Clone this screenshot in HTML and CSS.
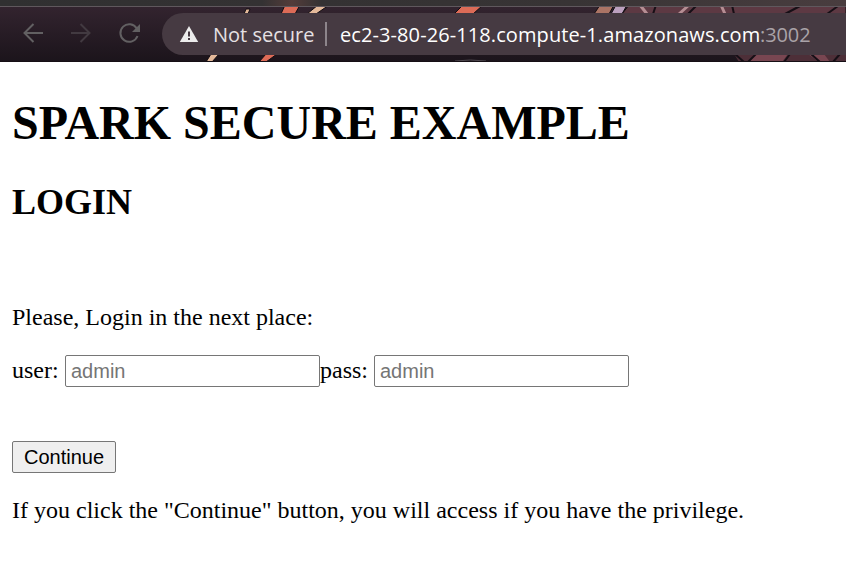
FILE: index.html
```html
<!DOCTYPE html>
<html lang="en">
<head>
<meta charset="utf-8">
<title>Spark Secure Example</title>
<link rel="stylesheet" href="styles.css">
</head>
<body>
<header class="toolbar">
  <svg class="art" width="846" height="62" viewBox="0 0 846 62" aria-hidden="true">
    <defs>
      <linearGradient id="bar" x1="0" y1="0" x2="0" y2="1"><stop offset="0" stop-color="#33242f"/><stop offset="1" stop-color="#1b141b"/></linearGradient>
      <linearGradient id="tab" x1="0" y1="0" x2="1" y2="0"><stop offset="0" stop-color="#303031"/><stop offset=".31" stop-color="#343233"/><stop offset=".345" stop-color="#533c3a"/><stop offset=".38" stop-color="#343233"/><stop offset=".68" stop-color="#383435"/><stop offset="1" stop-color="#493d3f"/></linearGradient>
    </defs>
    <path fill="url(#bar)" d="M0 6h846v56H0z"/>
    <g stroke="#100c12" stroke-width="1">
      <path fill="#dc6b57" d="M285 5h15l-5 9h-14zM259 62l7-8h11l-11 8zM463 5h20l-10 9h-19z"/>
      <path fill="#e4b99a" d="M318 5h11l-13 9h-9zM206 62l5-8h8l-7 8zM244 14l2-5h4l-2 5z"/>
      <path fill="#ab7465" d="M600 5h14l-5 9h-15z"/>
      <path fill="#bca0bf" d="M616 5h11l-5 9h-11z"/>
      <path fill="#5d3943" d="M629 5h217v9H622z"/>
    </g>
    <path fill="#4d2f38" d="M734 54h112v8H739z"/>
    <path fill="#784651" d="M754 54h34l-6 8h-33zM808 54h16l6 8h-11z"/>
    <path fill="none" stroke="#b68e94" stroke-width="3" d="M640 5l7 9M689 5l-10 9M721 5l4 9"/>
    <path fill="none" stroke="#160f16" stroke-width="2" d="M656 5l-3 9M697 5l-9 9M732 5l2 9M785 14l15-8M838 6l-11 8M744 62l-9-8M756 54l-8 8M790 54l-6 8M811 54l9 8M840 54l-7 8"/>
    <path fill="none" stroke="#514a51" d="M455 61q15-2 31 0"/>
    <path fill="url(#tab)" d="M0 0h846v6H0z"/>
    <path fill="#5f585d" d="M0 6h846v1H0z"/>
    <path fill="#160f15" d="M0 61h846v1H0z"/>
  </svg>
  <nav class="nav">
    <svg width="150" height="40" viewBox="0 0 150 40" fill="none" stroke-width="2" aria-hidden="true">
      <path stroke="#626062" d="M43 20H24.5M33.500 11l-9 9 9 9"/>
      <path stroke="#423a41" d="M71 20h18.500M80.500 11l9 9-9 9"/>
      <path stroke="#626062" d="M136.800 15.500A8.800 8.800 0 1 0 137.500 23"/>
      <path fill="#626062" d="M140 11v8h-8z"/>
    </svg>
  </nav>
  <div class="address">
    <svg class="warning" width="20" height="18" viewBox="0 0 20 18" aria-hidden="true"><path fill="#ececec" d="M10 1l9.200 16H.8z"/><path fill="#463a42" d="M9 6.500h2v5H9zM9 13h2v2H9z"/></svg>
    <span class="security">Not secure</span>
    <span class="divider"></span>
    <span class="host">ec2-3-80-26-118.compute-1.amazonaws.com</span><span class="port">:3002</span>
  </div>
</header>
<main>
  <h1>SPARK SECURE EXAMPLE</h1>
  <h2>LOGIN</h2>
  <br>
  <p>Please, Login in the next place:</p>
  <form>
    <div class="fields"><label for="user">user:</label><input id="user" type="text" placeholder="admin"><label for="pass">pass:</label><input id="pass" type="text" placeholder="admin"></div>
    <button type="button">Continue</button>
  </form>
  <p>If you click the "Continue" button, you will access if you have the privilege.</p>
</main>
</body>
</html>
```
FILE: styles.css
```css
* { box-sizing: border-box; }
body { margin: 0; background: #fff; color: #000; font: 24px/27px "Liberation Serif", serif; overflow: hidden; }
.toolbar { position: relative; display: flex; height: 62px; padding-top: 13px; background: #20181f; }
.art { position: absolute; top: 0; left: 0; }
.nav { position: relative; width: 162px; flex: none; }
.nav svg { display: block; }
.address { position: relative; display: flex; align-items: center; flex: 1; height: 42px; padding-left: 17px; border-radius: 21px 0 0 21px; background: #463a42; font: 20px/42px "Open Sans", sans-serif; white-space: nowrap; }
.address span:not(.divider) { padding-top: 2px; }
.warning { flex: none; margin-right: 14px; }
.security { width: 112px; color: #e5e0e3; }
.divider { width: 2px; height: 24px; margin-right: 13px; background: #8d858b; }
.host { width: 420px; color: #fff; letter-spacing: .09px; }
.port { color: #aaa3a8; letter-spacing: -.1px; }
main { padding: 33px 12px 0; }
h1 { margin: 0 0 32px; font-size: 48px; line-height: 55px; }
h2 { margin: 0 0 30px; font-size: 36px; line-height: 41px; }
p { margin: 24px 0; }
form { margin: 24px 0; }
.fields { display: flex; align-items: center; height: 32px; margin-bottom: 54px; }
.fields label { width: 53px; padding-bottom: 2px; }
.fields label + input + label { width: 54px; }
input { width: 255px; height: 32px; padding: 1px 5px; border: 1px solid #767676; border-radius: 2px; background: #fff; font: 20px "Liberation Sans", sans-serif; }
input::placeholder { color: #757575; }
button { display: block; width: 104px; height: 32px; padding: 0; border: 1px solid #767676; border-radius: 2px; background: #efefef; color: #000; font: 20px "Liberation Sans", sans-serif; }
```
